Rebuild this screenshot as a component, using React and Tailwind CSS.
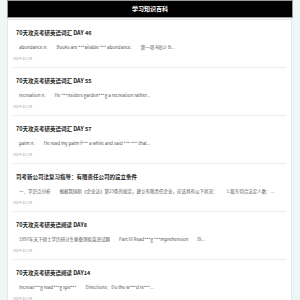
import React from "react";

const posts = [
  {
    title: "70天攻克考研英语词汇 DAY 46",
    excerpt: ["abundance n.", "Books are ***ailable *** abundance.", "第一项 A短少 B..."],
  },
  {
    title: "70天攻克考研英语词汇 DAY 55",
    excerpt: ["recreation n.", "He ***nsiders garden***g a recreation rather..."],
  },
  {
    title: "70天攻克考研英语词汇 DAY 57",
    excerpt: ["palm n.", "He read my palm f*** a while and said *** *** that..."],
  },
  {
    title: "司考新公司法复习指导：有限责任公司的设立条件",
    excerpt: [
      "一、学识点分析",
      "根据我国新《企业法》第23条的规定，建立有限责任企业，应该具有以下状况：",
      "1.股东切合法定人数：...",
    ],
  },
  {
    title: "70天攻克考研英语阅读 DAY8",
    excerpt: ["1997年天下硕士学历研讨生家眷测验英语试题", "Part III Read***g ***mprehension", "Di..."],
  },
  {
    title: "70天攻克考研英语阅读 DAY14",
    excerpt: ["Increas***g read***g spe***", "Directions：Do the w***d re***..."],
  },
];

const font = { fontFamily: '"Noto Sans CJK SC", "Noto Sans", sans-serif' };

const App = () => {
  return (
    <div
      className="h-[300px] w-[300px] overflow-hidden bg-[#eef6f6] px-[7px]"
      style={font}
    >
      <header className="flex h-[18px] items-center justify-center border border-[#9a9a9a] bg-black">
        <h1 className="text-[6px] font-bold leading-none text-white">学习知识百科</h1>
      </header>
      <main className="mt-[1px] h-[290px] border border-[#e4e8e8] bg-white px-[5px] mr-[1px]">
        {posts.map((post, i) => (
          <article key={i} className="h-[48px] border-b border-[#ececec]">
            <h2 className="pt-[8px] pl-[3px] text-[5.5px] font-bold leading-[10px] text-[#222]">
              {post.title}
            </h2>
            <p className="mt-[5px] flex whitespace-nowrap pl-[6px] text-[4.5px] leading-[8px] text-[#555]">
              {post.excerpt.map((s, j) => (
                <span key={j} className="mr-[9px]">
                  {s}
                </span>
              ))}
            </p>
            <time className="mt-[5px] block text-[3.7px] leading-[6px] text-[#999]">
              2024-12-29
            </time>
          </article>
        ))}
      </main>
    </div>
  );
};

export default App;
